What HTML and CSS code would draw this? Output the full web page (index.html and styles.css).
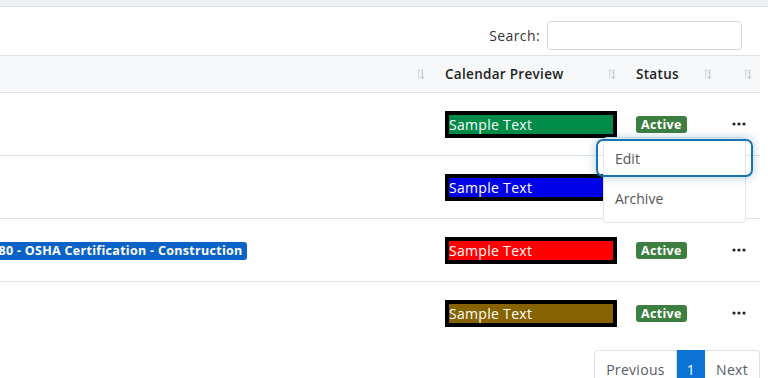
FILE: index.html
```html
<!doctype html>
<html>

<head>
  <title>Calendars</title>
  <meta http-equiv="Content-Type" content="text/html; charset=UTF-8">
  <link rel="stylesheet" href="styles.css">
</head>

<body>
  <div class="topbar"></div>
  <div class="panel">
    <div class="search-row">
      <label for="search">Search:</label>
      <input id="search" type="search">
    </div>
    <div class="table-wrap">
      <table class="grid">
        <colgroup>
          <col class="c-name">
          <col class="c-preview">
          <col class="c-status">
          <col class="c-actions">
        </colgroup>
        <thead>
          <tr>
            <th><div class="th-in"><span></span><svg class="sort" viewBox="0 0 10 12"><path d="M3 11V1M1 3l2-2 2 2" class="up"/><path d="M7 1v10M5 9l2 2 2-2" class="down"/></svg></div></th>
            <th><div class="th-in"><span>Calendar Preview</span><svg class="sort" viewBox="0 0 10 12"><path d="M3 11V1M1 3l2-2 2 2" class="up"/><path d="M7 1v10M5 9l2 2 2-2" class="down"/></svg></div></th>
            <th><div class="th-in"><span>Status</span><svg class="sort" viewBox="0 0 10 12"><path d="M3 11V1M1 3l2-2 2 2" class="up"/><path d="M7 1v10M5 9l2 2 2-2" class="down"/></svg></div></th>
            <th><div class="th-in"><span></span><svg class="sort" viewBox="0 0 10 12"><path d="M3 11V1M1 3l2-2 2 2" class="up"/><path d="M7 1v10M5 9l2 2 2-2" class="down"/></svg></div></th>
          </tr>
        </thead>
        <tbody>
          <tr>
            <td></td>
            <td><span class="preview green">Sample Text</span></td>
            <td><span class="badge active">Active</span></td>
            <td class="actions">
              <svg class="dots" viewBox="0 0 14 4"><circle cx="2" cy="2" r="1.6"/><circle cx="7" cy="2" r="1.6"/><circle cx="12" cy="2" r="1.6"/></svg>
              <div class="menu">
                <a href="#" class="menu-item focused">Edit</a>
                <a href="#" class="menu-item">Archive</a>
              </div>
            </td>
          </tr>
          <tr>
            <td></td>
            <td><span class="preview blue">Sample Text</span></td>
            <td></td>
            <td class="actions"><svg class="dots" viewBox="0 0 14 4"><circle cx="2" cy="2" r="1.6"/><circle cx="7" cy="2" r="1.6"/><circle cx="12" cy="2" r="1.6"/></svg></td>
          </tr>
          <tr>
            <td><span class="badge course">380 - OSHA Certification - Construction</span></td>
            <td><span class="preview red">Sample Text</span></td>
            <td><span class="badge active">Active</span></td>
            <td class="actions"><svg class="dots" viewBox="0 0 14 4"><circle cx="2" cy="2" r="1.6"/><circle cx="7" cy="2" r="1.6"/><circle cx="12" cy="2" r="1.6"/></svg></td>
          </tr>
          <tr>
            <td></td>
            <td><span class="preview olive">Sample Text</span></td>
            <td><span class="badge active">Active</span></td>
            <td class="actions"><svg class="dots" viewBox="0 0 14 4"><circle cx="2" cy="2" r="1.6"/><circle cx="7" cy="2" r="1.6"/><circle cx="12" cy="2" r="1.6"/></svg></td>
          </tr>
        </tbody>
      </table>
    </div>
    <div class="pager">
      <a href="#" class="page first">Previous</a>
      <a href="#" class="page current">1</a>
      <a href="#" class="page last">Next</a>
    </div>
  </div>
</body>

</html>
```

FILE: styles.css
```css
html,
body {
  margin: 0;
  background-color: white;
  font-family: 'Open Sans', 'Noto Sans', sans-serif;
  color: #212529;
  overflow: hidden;
}

.topbar {
  height: 6px;
  background-color: #eef0f4;
  border-bottom: 1px solid #dfe3e8;
}

.panel {
  padding-right: 8px;
}

.search-row {
  display: flex;
  justify-content: flex-end;
  align-items: center;
  gap: 7px;
  margin-top: 14px;
  padding-right: 18px;
  font-size: 14px;
  letter-spacing: .4px;
  color: #333;
}

.search-row input {
  width: 195px;
  height: 29px;
  box-sizing: border-box;
  border: 1px solid #d4d8dd;
  border-radius: 4px;
  margin: 0;
}

.table-wrap {
  overflow: hidden;
  margin-top: 5px;
}

.grid {
  border-collapse: collapse;
  table-layout: fixed;
  width: 778px;
  margin-left: -18px;
}

.c-name { width: 451px }
.c-preview { width: 191px }
.c-status { width: 96px }
.c-actions { width: 40px }

.grid th {
  height: 36px;
  padding: 0 8px 0 12px;
  background-color: #f7f8fa;
  border-top: 1px solid #dee2e6;
  border-bottom: 1px solid #dee2e6;
  font-size: 13.5px;
  letter-spacing: .3px;
  font-weight: 600;
  text-align: left;
  color: #222;
}

.th-in {
  display: flex;
  justify-content: space-between;
  align-items: center;
}

.sort {
  width: 9px;
  height: 12px;
  fill: none;
  stroke-width: 1;
}

.sort .up { stroke: #cfd3d8 }
.sort .down { stroke: #b3b8be }

.grid td {
  height: 62px;
  padding: 0 12px;
  border-bottom: 1px solid #dee2e6;
  vertical-align: middle;
  font-size: 13px;
}

.grid tbody tr:last-child td {
  border-bottom: none;
}

.preview {
  display: block;
  width: 164px;
  border: 4px solid black;
  font-size: 14px;
  letter-spacing: .3px;
  line-height: 19px;
  color: white;
}

.green { background-color: #008b48 }
.blue { background-color: #0202e8 }
.red { background-color: #ff0000 }
.olive { background-color: #866300 }

.badge {
  display: inline-block;
  border-radius: 3px;
  color: white;
  font-weight: 700;
  font-size: 12.5px;
  letter-spacing: .3px;
}

.active {
  background-color: #3d7e41;
  padding: 0 5px;
  line-height: 17px;
}

.course {
  background-color: #0c63c7;
  padding: 0 4px 0 0;
  line-height: 18px;
  margin-left: -3px;
}

.actions {
  position: relative;
}

.dots {
  display: block;
  width: 14px;
  height: 4px;
  fill: #222;
}

.menu {
  position: absolute;
  left: -117px;
  top: 44px;
  width: 141px;
  padding: 2px 0;
  background-color: white;
  border: 1px solid #e3e6ea;
  border-radius: 4px;
  z-index: 2;
}

.menu-item {
  display: block;
  position: relative;
  height: 40px;
  line-height: 37px;
  padding-left: 11px;
  font-size: 14px;
  color: #555;
  text-decoration: none;
}

.focused::after {
  content: '';
  position: absolute;
  top: -1px;
  bottom: 3px;
  left: -8px;
  right: -8px;
  border: 2px solid #1a72b2;
  border-radius: 7px;
  box-shadow: 0 0 8px 2px rgba(26, 114, 178, .25);
}

.pager {
  display: flex;
  justify-content: flex-end;
  margin-top: 6px;
}

.page {
  padding: 8px 11px;
  border: 1px solid #dee2e6;
  font-size: 14px;
  letter-spacing: .3px;
  line-height: 21px;
  color: #555c66;
  text-decoration: none;
}

.first {
  border-radius: 4px 0 0 4px;
}

.current {
  padding: 8px 9px;
  background-color: #0b72d6;
  border-color: #0b72d6;
  color: white;
}

.last {
  border-radius: 0 4px 4px 0;
  border-left: none;
}
```
